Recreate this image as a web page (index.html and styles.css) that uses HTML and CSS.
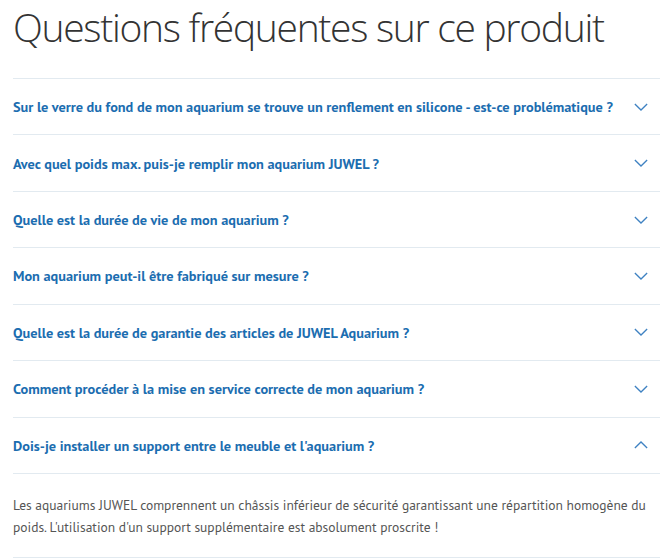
FILE: index.html
```html
<!DOCTYPE html>
<html lang="fr">
<head>
<meta charset="utf-8">
<link rel="stylesheet" href="styles.css">
</head>
<body>
<section class="faq">
  <h2 class="faq-title">Questions fréquentes sur ce produit</h2>
  <div class="faq-list">
    <div class="faq-item">
      <div class="faq-q"><span>Sur le verre du fond de mon aquarium se trouve un renflement en silicone - est-ce problématique ?</span>
        <svg class="chev" viewBox="0 0 16 9"><path d="M1 1l7 7 7-7"/></svg></div>
    </div>
    <div class="faq-item">
      <div class="faq-q"><span>Avec quel poids max. puis-je remplir mon aquarium JUWEL ?</span>
        <svg class="chev" viewBox="0 0 16 9"><path d="M1 1l7 7 7-7"/></svg></div>
    </div>
    <div class="faq-item">
      <div class="faq-q"><span>Quelle est la durée de vie de mon aquarium ?</span>
        <svg class="chev" viewBox="0 0 16 9"><path d="M1 1l7 7 7-7"/></svg></div>
    </div>
    <div class="faq-item">
      <div class="faq-q"><span>Mon aquarium peut-il être fabriqué sur mesure ?</span>
        <svg class="chev" viewBox="0 0 16 9"><path d="M1 1l7 7 7-7"/></svg></div>
    </div>
    <div class="faq-item">
      <div class="faq-q"><span>Quelle est la durée de garantie des articles de JUWEL Aquarium ?</span>
        <svg class="chev" viewBox="0 0 16 9"><path d="M1 1l7 7 7-7"/></svg></div>
    </div>
    <div class="faq-item">
      <div class="faq-q"><span>Comment procéder à la mise en service correcte de mon aquarium ?</span>
        <svg class="chev" viewBox="0 0 16 9"><path d="M1 1l7 7 7-7"/></svg></div>
    </div>
    <div class="faq-item open">
      <div class="faq-q"><span>Dois-je installer un support entre le meuble et l'aquarium ?</span>
        <svg class="chev" viewBox="0 0 16 9"><path d="M1 8l7-7 7 7"/></svg></div>
      <div class="faq-a">Les aquariums JUWEL comprennent un châssis inférieur de sécurité garantissant une répartition homogène du poids. L'utilisation d'un support supplémentaire est absolument proscrite !</div>
    </div>
  </div>
</section>
</body>
</html>
```
FILE: styles.css
```css
html, body {
  margin: 0;
  padding: 0;
  background: #fff;
}
.faq {
  padding: 0 4px 0 13px;
}
.faq-title {
  margin: 0;
  padding-top: 2px;
  height: 76px;
  font-family: "Open Sans", "Roboto", sans-serif;
  font-weight: 300;
  font-size: 39px;
  letter-spacing: -1.3px;
  line-height: 50px;
  white-space: nowrap;
  color: #333;
}
.faq-list {
  border-top: 1px solid #e2eaf0;
}
.faq-item {
  border-bottom: 1px solid #e2eaf0;
}
.faq-q {
  display: flex;
  align-items: center;
  justify-content: space-between;
  height: 55.43px;
  font-family: "PT Sans", "Noto Sans", sans-serif;
  font-weight: 700;
  font-size: 14.3px;
  color: #1b6db0;
}
.faq-q span {
  white-space: nowrap;
  min-width: 0;
}
.chev {
  flex-shrink: 0;
  width: 14px;
  height: 8px;
  margin-right: 12px;
  fill: none;
  stroke: #3f82c2;
  stroke-width: 1.5;
}
.faq-a {
  border-top: 1px solid #e2eaf0;
  padding: 20px 0 19px;
  font-family: "PT Sans", "Noto Sans", sans-serif;
  font-size: 13.5px;
  line-height: 22px;
  color: #555;
}
```
